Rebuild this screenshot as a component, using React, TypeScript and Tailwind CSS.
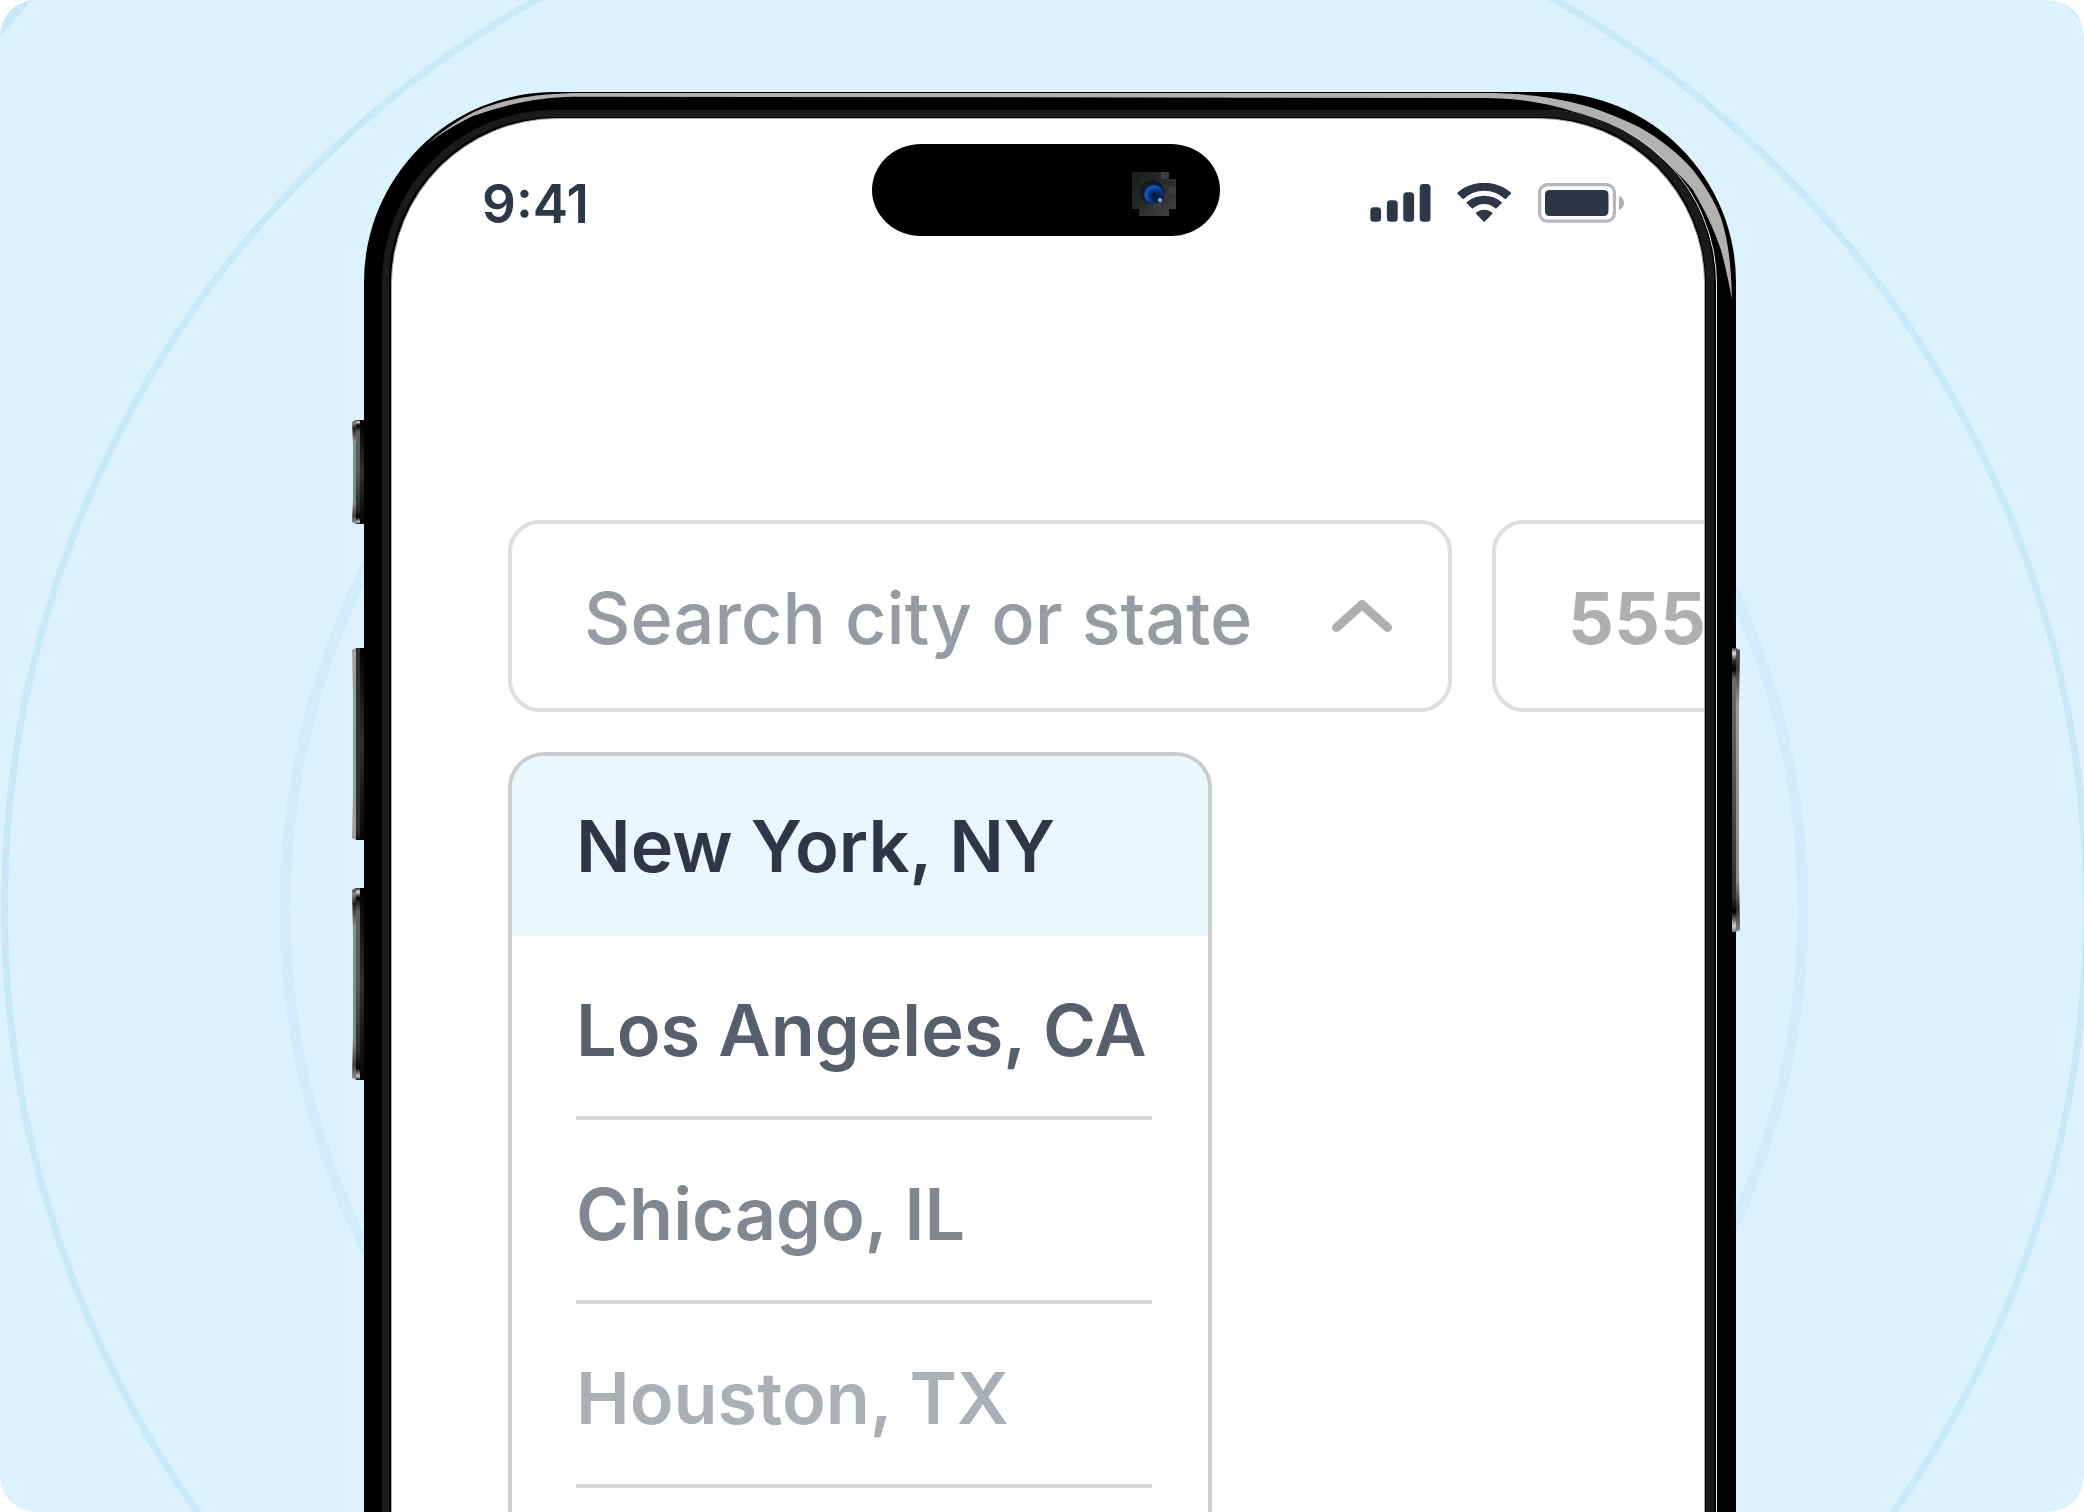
import React from 'react';
import { clsx } from 'clsx';

interface City {
  name: string;
  color: string;
}

const cities: City[] = [
  { name: 'New York, NY', color: 'text-[#2d3748]' },
  { name: 'Los Angeles, CA', color: 'text-[#575f6d]' },
  { name: 'Chicago, IL', color: 'text-[#818791]' },
  { name: 'Houston, TX', color: 'text-[#abafb6]' },
];

const Rings: React.FC = () => (
  <svg
    className="absolute inset-0 h-full w-full"
    viewBox="0 0 2084 1512"
    preserveAspectRatio="xMidYMid slice"
    fill="none"
    aria-hidden="true"
  >
    <circle cx="1044" cy="909" r="759" stroke="#d1edfd" strokeWidth="11" />
    <circle cx="1045.5" cy="908" r="1041" stroke="#c9e9fb" strokeWidth="7" />
    <circle cx="1047" cy="910" r="1371" stroke="#c9e9fb" strokeWidth="16" />
  </svg>
);

interface SideButtonProps {
  id: string;
  height: number;
  capped?: boolean;
}

// Volume / action key on the left edge of the frame
const SideButton: React.FC<SideButtonProps> = ({ id, height, capped = true }) => (
  <svg width="12" height={height} viewBox={`0 0 12 ${height}`} aria-hidden="true">
    <defs>
      <linearGradient id={`${id}-edge`} x1="0" y1="0" x2="0" y2={height} gradientUnits="userSpaceOnUse">
        <stop offset="0" stopColor={capped ? '#3a3a3a' : '#8f8f8f'} />
        <stop offset="0.03" stopColor={capped ? '#8a8a8a' : '#a8a8a8'} />
        <stop offset="0.08" stopColor={capped ? '#1c1c1c' : '#a0a0a0'} />
        <stop offset="0.2" stopColor={capped ? '#8c8c8c' : '#9a9a9a'} />
        <stop offset="0.8" stopColor={capped ? '#858585' : '#9a9a9a'} />
        <stop offset="0.92" stopColor={capped ? '#3c3c3c' : '#a0a0a0'} />
        <stop offset="1" stopColor="#9a9a9a" />
      </linearGradient>
      <linearGradient id={`${id}-mid`} x1="0" y1="0" x2="0" y2={height} gradientUnits="userSpaceOnUse">
        <stop offset="0" stopColor={capped ? '#2a2a2a' : '#303030'} />
        <stop offset="0.02" stopColor={capped ? '#d8d8d8' : '#303030'} />
        <stop offset="0.05" stopColor={capped ? '#000' : '#303030'} />
        <stop offset="0.12" stopColor={capped ? '#5e5e5e' : '#303030'} />
        <stop offset="0.5" stopColor={capped ? '#585858' : '#363636'} />
        <stop offset="0.86" stopColor={capped ? '#2a2a2a' : '#303030'} />
        <stop offset="0.94" stopColor={capped ? '#000' : '#303030'} />
        <stop offset="0.98" stopColor={capped ? '#c4c4c4' : '#202020'} />
        <stop offset="1" stopColor="#101010" />
      </linearGradient>
      <linearGradient id={`${id}-base`} x1="0" y1="0" x2="0" y2={height} gradientUnits="userSpaceOnUse">
        <stop offset="0" stopColor="#000" />
        <stop offset="0.5" stopColor="#303030" />
        <stop offset="1" stopColor="#050507" />
      </linearGradient>
    </defs>
    <path
      d={`M0 2L4 0V${height}L0 ${height - 2}L1 ${height * 0.75}V${height * 0.25}Z`}
      fill={`url(#${id}-edge)`}
    />
    <rect x="4" width="4" height={height} fill={`url(#${id}-mid)`} />
    <rect x="8" width="4" height={height} fill={`url(#${id}-base)`} />
  </svg>
);

const PowerButton: React.FC = () => (
  <svg width="8" height="284" viewBox="0 0 8 284" aria-hidden="true">
    <defs>
      <linearGradient id="power" x1="0" y1="0" x2="0" y2="284" gradientUnits="userSpaceOnUse">
        <stop offset="0" stopColor="#3a3a3a" />
        <stop offset="0.018" stopColor="#dcdcdc" />
        <stop offset="0.045" stopColor="#2a2a2a" />
        <stop offset="0.075" stopColor="#000" />
        <stop offset="0.11" stopColor="#6a6a6a" />
        <stop offset="0.4" stopColor="#5a5656" />
        <stop offset="0.88" stopColor="#2e2c2c" />
        <stop offset="0.93" stopColor="#000" />
        <stop offset="0.98" stopColor="#d0d0d0" />
        <stop offset="1" stopColor="#6a6a6a" />
      </linearGradient>
      <linearGradient id="power-edge" x1="0" y1="0" x2="0" y2="284" gradientUnits="userSpaceOnUse">
        <stop offset="0" stopColor="#5a5a5a" />
        <stop offset="0.07" stopColor="#3a3a3a" />
        <stop offset="0.2" stopColor="#9c9a9a" />
        <stop offset="0.82" stopColor="#8c8a8a" />
        <stop offset="0.92" stopColor="#2c2c2c" />
        <stop offset="1" stopColor="#8a8a8a" />
      </linearGradient>
    </defs>
    <rect width="4" height="284" fill="url(#power)" />
    <path d="M4 0L8 2L7 60V224L8 282L4 284Z" fill="url(#power-edge)" />
  </svg>
);

// Light reflected along the top rim and the right corner
const RimHighlight: React.FC = () => (
  <svg className="absolute inset-x-0 top-0 w-full" viewBox="0 0 1372 220" aria-hidden="true">
    <path
      d="M54 60C70 46 88 31 109 20.500C132 10.500 158 2.500 209 1H1120C1150 1 1180 3.500 1209 10.500C1232 16 1252 24 1276 35.500C1296 47 1314 61 1329 78C1343 96 1352 112 1357 126C1364 148 1367 170 1368 207C1364 186 1360 168 1356 155C1350 138 1344 124 1329 98C1316 82 1300 67 1276 49C1254 35 1232 25 1209 19.500C1180 10 1150 6 1120 6L209 4.700C180 5.500 152 9 109 24C90 33 72 44 54 60Z"
      fill="#b1b1b1"
    />
  </svg>
);

const DynamicIsland: React.FC = () => (
  <svg width="348" height="92" viewBox="0 0 348 92" aria-hidden="true">
    <defs>
      <radialGradient id="lens" cx="0.5" cy="0.55" r="0.55">
        <stop offset="0" stopColor="#04182f" />
        <stop offset="0.45" stopColor="#063a86" />
        <stop offset="0.8" stopColor="#0b5fd0" />
        <stop offset="1" stopColor="#021228" />
      </radialGradient>
      <linearGradient id="sensor" x1="0" y1="0" x2="1" y2="1">
        <stop offset="0" stopColor="#191a1a" />
        <stop offset="0.5" stopColor="#2a2b2c" />
        <stop offset="1" stopColor="#444547" />
      </linearGradient>
      <linearGradient id="lens-shade" x1="0" y1="0" x2="1" y2="1">
        <stop offset="0.4" stopColor="#000" stopOpacity="0" />
        <stop offset="0.9" stopColor="#000" stopOpacity="0.75" />
      </linearGradient>
    </defs>
    <rect width="348" height="92" rx="49" ry="46" fill="#000" />
    <path d="M260 28H297V35H304V65H297V72H267V65H260Z" fill="url(#sensor)" />
    <path d="M289 28H297V35H289ZM297 43H304V50H297ZM282 58H289V65H282Z" fill="#3d3e41" />
    <path d="M267 35H274V43H267ZM274 28H282V35H274ZM260 50H267V58H260Z" fill="#232424" />
    <circle cx="280" cy="48" r="12" fill="#121a22" />
    <circle cx="282" cy="50" r="10" fill="url(#lens)" />
    <circle cx="282" cy="50" r="10" fill="url(#lens-shade)" />
    <circle cx="288" cy="56" r="2" fill="#9aa6b2" />
  </svg>
);

const SignalIcon: React.FC = () => (
  <svg width="61" height="40" viewBox="0 0 61 40" fill="#2d3748" aria-hidden="true">
    <rect x="0.300" y="24.300" width="10.800" height="14.500" rx="3.500" />
    <rect x="16.900" y="17.300" width="10.800" height="21.500" rx="3.500" />
    <rect x="33.300" y="9.300" width="10.800" height="29.500" rx="3.500" />
    <rect x="49.700" y="1" width="10.800" height="37.800" rx="3.500" />
  </svg>
);

const WifiIcon: React.FC = () => (
  <svg width="55" height="40" viewBox="0 0 55 40" fill="#2d3748" aria-hidden="true">
    <path d="M27.200 7.800C34.700 7.800 41.900 10.700 47.400 15.800C47.800 16.200 48.400 16.200 48.800 15.800L53.700 11.100C54.200 10.700 54.200 10 53.700 9.600C38.900 -3.500 15.500 -3.500 0.700 9.600C0.200 10 0.200 10.700 0.700 11.100L5.600 15.800C6 16.200 6.600 16.200 7 15.800C12.500 10.700 19.700 7.800 27.200 7.800Z" />
    <path d="M27.200 21C31.300 21 35.200 22.500 38.200 25.300C38.600 25.700 39.200 25.700 39.600 25.300L44.500 20.500C44.900 20.100 44.900 19.500 44.500 19.100C34.700 10.700 19.700 10.700 9.900 19.100C9.500 19.500 9.500 20.100 9.900 20.500L14.800 25.300C15.200 25.700 15.800 25.700 16.200 25.300C19.200 22.500 23.100 21 27.200 21Z" />
    <path d="M35.200 31C35.600 30.600 35.600 30 35.200 29.600C30.500 25.700 23.900 25.700 19.200 29.600C18.800 30 18.800 30.600 19.200 31L26.500 38.400C26.900 38.800 27.500 38.800 27.900 38.400Z" />
  </svg>
);

const BatteryIcon: React.FC = () => (
  <svg width="86" height="40" viewBox="0 0 86 40" aria-hidden="true">
    <rect x="1.600" y="1.600" width="74.800" height="36.600" rx="8" fill="none" stroke="#b5b8c0" strokeWidth="3.200" />
    <rect x="7" y="7" width="63.500" height="26" rx="4.500" fill="#2d3748" />
    <path d="M81 12.700C84 14 86 16.800 86 20C86 23.200 84 26 81 27.300Z" fill="#abafb6" />
  </svg>
);

const StatusBar: React.FC = () => (
  <header className="grid grid-cols-[1fr_auto_1fr] items-end pt-[25px] pr-1">
    <time className="pl-[90px] text-[53px] leading-[64px] font-semibold text-[#2d3748]">9:41</time>
    <DynamicIsland />
    <div className="flex h-[66px] items-center justify-end gap-[26px] pr-[76px]">
      <SignalIcon />
      <WifiIcon />
      <BatteryIcon />
    </div>
  </header>
);

const SearchFields: React.FC = () => (
  <div className="flex w-max gap-10">
    <div className="flex h-48 w-[944px] items-center rounded-[32px] border-4 border-[#dce0e0] pr-14 pl-[72px]">
      <input
        type="text"
        aria-label="Search city or state"
        placeholder="Search city or state"
        className="min-w-0 flex-1 pt-1 text-[72px] leading-[88px] font-medium outline-none placeholder:text-[#969ba4] placeholder:opacity-100"
      />
      <button type="button" aria-label="Toggle city list">
        <svg width="60" height="32" viewBox="0 0 60 32" fill="none" aria-hidden="true">
          <path
            d="M4.500 27.500L30 4.700L55.500 27.500"
            stroke="#adafb0"
            strokeWidth="9"
            strokeLinecap="round"
            strokeLinejoin="round"
          />
        </svg>
      </button>
    </div>
    <div className="flex h-48 w-[480px] items-center rounded-[32px] border-4 border-[#dce0e0] pl-[72px]">
      <input
        type="tel"
        aria-label="Area code"
        placeholder="555"
        className="min-w-0 flex-1 pt-1 text-[72px] leading-[88px] font-bold outline-none placeholder:text-[#adafb0] placeholder:opacity-100"
      />
    </div>
  </div>
);

const CityList: React.FC = () => (
  <ul
    role="listbox"
    aria-label="Cities"
    className="mt-10 w-[704px] flex-1 overflow-hidden rounded-t-[36px] border-4 border-b-0 border-[#c9cdd0] text-[72px] leading-[88px] font-semibold"
  >
    {cities.map((city, index) => (
      <li
        key={city.name}
        role="option"
        aria-selected={index === 0}
        className={clsx(
          'whitespace-nowrap',
          city.color,
          index === 0 ? 'bg-[#eaf7fe] px-16 py-[46px]' : 'mr-14 ml-16 border-b-4 border-[#d5d7db] pt-[50px] pb-[42px]'
        )}
      >
        {city.name}
      </li>
    ))}
  </ul>
);

const App: React.FC = () => {
  return (
    <div className="bg-white font-['Inter',sans-serif]">
      <main className="relative flex h-screen flex-col overflow-hidden rounded-[36px] bg-[#dcf3ff] pt-[92px] pr-[348px] pl-[364px]">
        <Rings />

        {/* Phone body, rim to screen */}
        <div className="relative flex min-h-0 flex-1 flex-col rounded-t-[190px] bg-black pt-[18px] pr-[19px] pl-[18px]">
          <RimHighlight />
          <div className="absolute top-[328px] -left-3">
            <SideButton id="action" height={104} />
          </div>
          <div className="absolute top-[556px] -left-3">
            <SideButton id="volume-up" height={192} capped={false} />
          </div>
          <div className="absolute top-[796px] -left-3">
            <SideButton id="volume-down" height={192} />
          </div>
          <div className="absolute top-[556px] -right-1">
            <PowerButton />
          </div>

          <div className="relative flex min-h-0 flex-1 flex-col rounded-t-[174px] border-r border-[#dcf3ff] pr-[2px]">
            <div className="flex min-h-0 flex-1 flex-col rounded-t-[172px] border-t-[7px] border-r-8 border-l-[7px] border-[#1a1a1a] bg-black pt-px pr-px pl-[2px]">
              <div className="flex min-h-0 flex-1 flex-col overflow-hidden rounded-t-[166px] border border-b-0 border-[#aaaaaa] bg-white">
                <StatusBar />
                <section className="mt-[284px] flex min-h-0 flex-1 flex-col pl-[116px]">
                  <SearchFields />
                  <CityList />
                </section>
              </div>
            </div>
          </div>
        </div>
      </main>
    </div>
  );
};

export default App;
